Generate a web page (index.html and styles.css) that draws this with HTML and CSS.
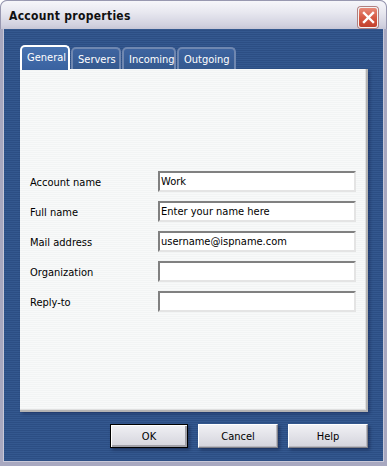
FILE: index.html
```html
<!DOCTYPE html>
<html>
<head>
<meta charset="utf-8">
<link rel="stylesheet" href="styles.css">
</head>
<body>
<div class="window">
  <div class="titlebar">
    <span class="title">Account properties</span>
    <span class="close">
      <svg width="13" height="13" viewBox="0 0 13 13"><path d="M2 2 L11 11 M11 2 L2 11" stroke="#fff" stroke-width="2.4" stroke-linecap="square"/></svg>
    </span>
  </div>
  <div class="body">
    <div class="tabs">
      <span class="tab active">General</span>
      <span class="tab">Servers</span>
      <span class="tab">Incoming</span>
      <span class="tab">Outgoing</span>
    </div>
    <div class="panel">
      <div class="form">
        <div class="row"><label>Account name</label><span class="field">Work</span></div>
        <div class="row"><label>Full name</label><span class="field">Enter your name here</span></div>
        <div class="row"><label>Mail address</label><span class="field">username@ispname.com</span></div>
        <div class="row"><label>Organization</label><span class="field"></span></div>
        <div class="row"><label>Reply-to</label><span class="field"></span></div>
      </div>
    </div>
    <div class="buttons">
      <span class="btn default">OK</span>
      <span class="btn">Cancel</span>
      <span class="btn">Help</span>
    </div>
  </div>
</div>
</body>
</html>
```
FILE: styles.css
```css
html, body {
  margin: 0;
  padding: 0;
  background: #ffffff;
}
body {
  font-family: "DejaVu Sans Condensed", "DejaVu Sans", sans-serif;
  font-size: 11px;
  color: #000;
}
.window {
  width: 387px;
  height: 466px;
  box-sizing: border-box;
  display: flex;
  flex-direction: column;
  border-radius: 7px 7px 0 0;
  overflow: hidden;
  background: #a0a0b8;
}
.titlebar {
  height: 29px;
  flex: none;
  display: flex;
  align-items: center;
  padding: 0 8px 0 8px;
  box-sizing: border-box;
  background: linear-gradient(to bottom, #f6f6fa 0%, #e8e8f0 40%, #d2d2e0 85%, #c6c6d6 100%);
  border: 1px solid #9898b0;
  border-bottom: none;
  border-radius: 7px 7px 0 0;
}
.title {
  flex: 1;
  font-family: "DejaVu Sans Condensed", "DejaVu Sans", sans-serif;
  font-weight: bold;
  font-size: 12px;
  color: #101010;
  letter-spacing: 0.3px;
  padding-top: 2px;
}
.close {
  width: 20px;
  height: 21px;
  box-sizing: border-box;
  border: 1px solid #f4f4f4;
  border-radius: 3px;
  background: linear-gradient(to bottom, #e88a78 0%, #d65a44 50%, #c2402c 100%);
  box-shadow: 0 0 0 1px #b08080;
  display: flex;
  align-items: center;
  justify-content: center;
  margin-top: 5px;
}
.body {
  flex: 1;
  display: flex;
  flex-direction: column;
  padding: 16px 0 0 17px;
  background: repeating-linear-gradient(to bottom, #34588f 0px, #34588f 1px, #2c4e84 1px, #2c4e84 2px);
  border-left: 3px solid #a8a8c0;
  border-right: 3px solid #a8a8c0;
  border-bottom: 4px solid #a8a8c0;
  box-shadow: inset 1px 0 0 #c8c8d8, inset -1px 0 0 #c8c8d8, inset 0 -1px 0 #c8c8d8;
}
.tabs {
  display: flex;
  align-items: flex-end;
  height: 24px;
  gap: 1px;
  position: relative;
  z-index: 1;
}
.tab {
  box-sizing: border-box;
  height: 22px;
  padding: 3px 5px 0 5px;
  border: 2px solid #6f87b0;
  border-bottom: none;
  border-radius: 5px 5px 0 0;
  background: linear-gradient(to bottom, #3e64a0, #34598f);
  color: #fff;
  line-height: 15px;
}
.tab.active {
  height: 25px;
  margin-bottom: -1px;
  padding-top: 3px;
  border-color: #ffffff;
  background: linear-gradient(to bottom, #4772b0, #3a62a0);
  width: 50px;
}
.tab:nth-child(2) { width: 50px; }
.tab:nth-child(3) { width: 54px; }
.tab:nth-child(4) { width: 59px; }
.panel {
  width: 348px;
  height: 343px;
  box-sizing: border-box;
  background: repeating-linear-gradient(to bottom, #f8f9f9 0px, #f8f9f9 1px, #f2f4f4 1px, #f2f4f4 2px);
  border-right: 2px solid #b4b4b4;
  border-bottom: 2px solid #b4b4b4;
  box-shadow: inset -1px -1px 0 #e0e0e0, 2px 2px 3px rgba(0,0,40,0.25);
  padding: 102px 10px 0 10px;
}
.form {
  display: flex;
  flex-direction: column;
  gap: 9px;
}
.row {
  display: flex;
  align-items: center;
  height: 21px;
}
.row label {
  width: 128px;
  flex: none;
  padding-top: 1px;
}
.field {
  width: 199px;
  height: 21px;
  box-sizing: border-box;
  background: #fff;
  border-top: 2px solid #808080;
  border-left: 2px solid #808080;
  border-right: 2px solid #e4e4e4;
  border-bottom: 2px solid #e4e4e4;
  padding: 1px 0 0 1px;
  line-height: 16px;
}
.buttons {
  display: flex;
  gap: 10px;
  padding-left: 90px;
  margin-top: 12px;
}
.btn {
  width: 80px;
  height: 24px;
  box-sizing: border-box;
  display: flex;
  align-items: center;
  justify-content: center;
  background: linear-gradient(to bottom, #f0f0f4 0%, #e2e2e8 50%, #d4d4dc 100%);
  border: 1px solid;
  border-color: #ffffff #808088 #808088 #ffffff;
  box-shadow: inset -1px -1px 0 #b8b8c0, 2px 2px 3px rgba(0,0,30,0.35);
}
.btn.default {
  width: 78px;
  border: 1px solid #000;
  box-shadow: inset 1px 1px 0 #fff, inset -2px -2px 0 #a0a0a8, 2px 2px 3px rgba(0,0,30,0.35);
}
```
